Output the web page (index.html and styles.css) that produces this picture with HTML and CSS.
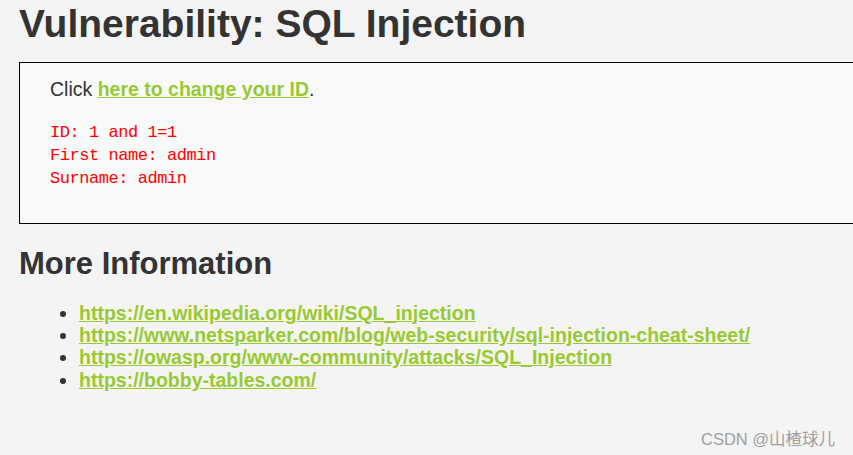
FILE: index.html
```html
<!DOCTYPE html>
<html>
<head>
<meta charset="utf-8">
<link rel="stylesheet" href="styles.css">
<title>SQL Injection</title>
</head>
<body>
<div class="page">
  <h1 class="title">Vulnerability: SQL Injection</h1>
  <div class="vulnerable">
    <p class="change">Click <a href="#">here to change your ID</a>.</p>
    <pre class="result">ID: 1 and 1=1
First name: admin
Surname: admin</pre>
  </div>
  <h2 class="subtitle">More Information</h2>
  <ul class="links">
    <li><a href="#">https://en.wikipedia.org/wiki/SQL_injection</a></li>
    <li><a href="#">https://www.netsparker.com/blog/web-security/sql-injection-cheat-sheet/</a></li>
    <li><a href="#">https://owasp.org/www-community/attacks/SQL_Injection</a></li>
    <li><a href="#">https://bobby-tables.com/</a></li>
  </ul>
</div>
<div class="watermark">CSDN @山楂球儿</div>
</body>
</html>
```

FILE: styles.css
```css
html {
  overflow: hidden;
}
body {
  margin: 0;
  background: #f4f4f4;
  color: #333333;
  font-family: "Liberation Sans", Arial, sans-serif;
  font-size: 19.5px;
  width: 853px;
  height: 455px;
  position: relative;
  overflow: hidden;
}
.page {
  padding: 1px 0 0 19px;
}
.title {
  margin: 0 0 16px 0;
  font-size: 39px;
  font-weight: bold;
  line-height: 45px;
}
.vulnerable {
  background: #f8f9f9;
  border: 1px solid #000;
  border-right: none;
  padding: 15px 30px 33px 30px;
}
.change {
  margin: 0 0 21px 0;
  line-height: 22.4px;
}
a {
  color: #99c932;
  font-weight: bold;
  text-decoration: underline;
}
.result {
  margin: 0;
  color: #ff0000;
  font-family: "Liberation Mono", "Courier New", monospace;
  font-size: 17px;
  letter-spacing: -0.45px;
  line-height: 23px;
}
.subtitle {
  margin: 22px 0 0 0;
  font-size: 31px;
  font-weight: bold;
  line-height: 35.6px;
}
.links {
  margin: 19.5px 0 0 0;
  padding-left: 60px;
  line-height: 22.4px;
}
.watermark {
  position: absolute;
  left: 701px;
  top: 426px;
  color: #a0a0a0;
  font-family: "Liberation Sans", "Noto Sans CJK SC", sans-serif;
  font-size: 16.5px;
}
```
